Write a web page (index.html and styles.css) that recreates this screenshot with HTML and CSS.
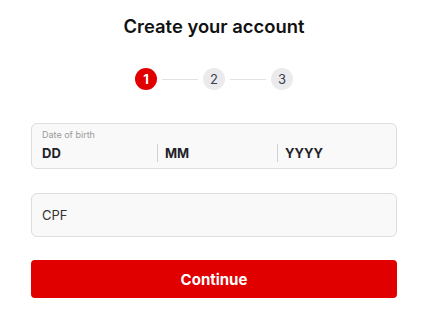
FILE: index.html
```html
<!DOCTYPE html>
<html lang="en">
  <head>
    <meta charset="UTF-8" />
    <meta name="viewport" content="width=device-width, initial-scale=1.0" />
    <title>Create your account</title>
    <link rel="stylesheet" href="styles.css">
  </head>
  <body>
    <div class="container">
      <h2 class="title">Create your account</h2>

      <!-- 進行ステップ -->
      <div class="steps">
        <span class="step active">1</span>
        <span class="step-line"></span>
        <span class="step">2</span>
        <span class="step-line"></span>
        <span class="step">3</span>
      </div>

      <div class="field date-field">
        <label class="field-label">Date of birth</label>
        <div class="date-parts">
          <span class="date-part">DD</span>
          <span class="date-part">MM</span>
          <span class="date-part">YYYY</span>
        </div>
      </div>

      <div class="field cpf-field">
        <span class="placeholder">CPF</span>
      </div>

      <button class="continue-button">Continue</button>
    </div>
  </body>
</html>
```

FILE: styles.css
```css
body {
  font-family: Inter, "Noto Sans", Arial, sans-serif;
  margin: 0;
  padding: 0;
  background-color: #ffffff;
  color: #1f2329;
}
.container {
  width: 366px;
  margin: 0 0 0 31px;
  padding-top: 14px;
}
.title {
  margin: 0;
  text-align: center;
  font-size: 18.4px;
  font-weight: 600;
  line-height: 24px;
  color: #111;
}
.steps {
  display: flex;
  justify-content: center;
  align-items: center;
  gap: 5px;
  margin: 30px 0 33px;
}
.step {
  width: 22px;
  height: 22px;
  border-radius: 50%;
  display: flex;
  align-items: center;
  justify-content: center;
  font-size: 13px;
  background-color: #ebebee;
  color: #3a4150;
}
.step.active {
  background-color: #e00000;
  color: #ffffff;
  font-weight: 700;
}
.step-line {
  width: 36px;
  height: 1px;
  background-color: #e2e2e2;
}
.field {
  box-sizing: border-box;
  border: 1px solid #dedede;
  border-radius: 6px;
  background-color: #f9f9f9;
  padding: 0 10px;
}
.date-field {
  height: 46px;
  padding-top: 5px;
}
.field-label {
  display: block;
  font-size: 9px;
  line-height: 11px;
  color: #9a9a9a;
}
.date-parts {
  display: grid;
  grid-template-columns: 115px 120px 1fr;
  margin-top: 4px;
}
.date-part {
  font-size: 13px;
  font-weight: 700;
  line-height: 18px;
  color: #1f2329;
}
.date-part + .date-part {
  border-left: 1px solid #d2d2d2;
  padding-left: 7px;
}
.cpf-field {
  height: 44px;
  margin-top: 24px;
  display: flex;
  align-items: center;
}
.placeholder {
  font-size: 13px;
  color: #333;
}
.continue-button {
  display: block;
  width: 100%;
  height: 38px;
  margin-top: 23px;
  border: none;
  border-radius: 4px;
  background-color: #e00000;
  color: #ffffff;
  font-family: inherit;
  font-size: 15px;
  font-weight: 700;
  cursor: pointer;
}
```
